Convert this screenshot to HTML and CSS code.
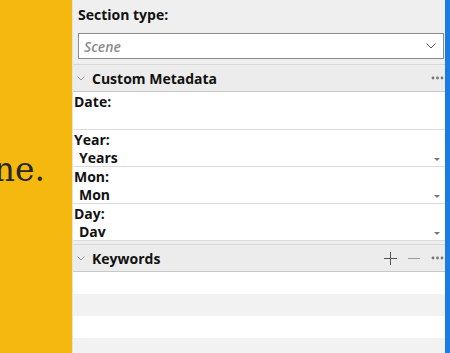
FILE: index.html
```html
<!DOCTYPE html>
<html>
<head>
<meta charset="utf-8">
<link rel="stylesheet" href="styles.css">
</head>
<body>
<div class="app">
  <div class="editor">
    <div class="editor-text">ne.</div>
  </div>
  <div class="inspector">
    <div class="section-label">Section type:</div>
    <div class="select">
      <span class="select-value">Scene</span>
      <svg class="select-chevron" width="10" height="6" viewBox="0 0 10 6"><path d="M0.5 0.5 L5 5 L9.5 0.5" fill="none" stroke="#555" stroke-width="1"/></svg>
    </div>
    <div class="pane-header">
      <svg class="disclosure" width="8" height="5" viewBox="0 0 8 5"><path d="M0.5 0.5 L4 4 L7.5 0.5" fill="none" stroke="#999" stroke-width="1"/></svg>
      <span class="pane-title">Custom Metadata</span>
      <span class="header-tools">
        <svg class="dots" width="13" height="4" viewBox="0 0 13 4"><circle cx="2" cy="2" r="1.4" fill="#777"/><circle cx="6.5" cy="2" r="1.4" fill="#777"/><circle cx="11" cy="2" r="1.4" fill="#777"/></svg>
      </span>
    </div>
    <div class="fields">
      <div class="field field-date">
        <div class="field-label">Date:</div>
      </div>
      <div class="field">
        <div class="field-label">Year:</div>
        <div class="field-value"><span>Years</span><span class="tri"></span></div>
      </div>
      <div class="field">
        <div class="field-label">Mon:</div>
        <div class="field-value"><span>Mon</span><span class="tri"></span></div>
      </div>
      <div class="field">
        <div class="field-label">Day:</div>
        <div class="field-value"><span>Dav</span><span class="tri"></span></div>
      </div>
    </div>
    <div class="pane-header keywords">
      <svg class="disclosure" width="8" height="5" viewBox="0 0 8 5"><path d="M0.5 0.5 L4 4 L7.5 0.5" fill="none" stroke="#999" stroke-width="1"/></svg>
      <span class="pane-title">Keywords</span>
      <span class="header-tools">
        <svg class="tool" width="13" height="13" viewBox="0 0 13 13"><path d="M6.5 0 V13 M0 6.5 H13" stroke="#555" stroke-width="1"/></svg>
        <svg class="tool" width="12" height="12" viewBox="0 0 12 12"><path d="M0 6.5 H12" stroke="#999" stroke-width="1"/></svg>
        <svg class="dots" width="13" height="4" viewBox="0 0 13 4"><circle cx="2" cy="2" r="1.4" fill="#777"/><circle cx="6.5" cy="2" r="1.4" fill="#777"/><circle cx="11" cy="2" r="1.4" fill="#777"/></svg>
      </span>
    </div>
    <div class="keyword-list">
      <div class="kw-row"></div>
      <div class="kw-row alt"></div>
      <div class="kw-row"></div>
      <div class="kw-row alt"></div>
    </div>
  </div>
</div>
</body>
</html>
```
FILE: styles.css
```css
html, body {
  margin: 0;
  padding: 0;
}
body {
  width: 450px;
  height: 353px;
  overflow: hidden;
  font-family: "Open Sans", "Noto Sans", sans-serif;
  color: #111;
}
.app {
  display: flex;
  height: 353px;
  overflow: hidden;
}
.editor {
  width: 72px;
  flex: none;
  background: #f4b80f;
  overflow: hidden;
  display: flex;
  justify-content: flex-end;
  padding-right: 27px;
  box-sizing: border-box;
}
.editor-text {
  font-family: "DejaVu Serif", serif;
  font-size: 33px;
  color: #262626;
  white-space: nowrap;
  margin-top: 151px;
  line-height: 38px;
  height: 38px;
}
.inspector {
  flex: 1;
  background: #efefef;
  border-left: 1px solid #e2e2e2;
  border-right: 5px solid #1a7ae6;
  display: flex;
  flex-direction: column;
  min-width: 0;
  overflow: hidden;
}
.inspector > * {
  flex-shrink: 0;
}
.section-label {
  font-weight: 700;
  font-size: 14px;
  line-height: 18px;
  padding: 6px 0 0 5px;
  height: 33px;
  box-sizing: border-box;
}
.select {
  margin: 0 0 0 5px;
  width: 366px;
  height: 26px;
  box-sizing: border-box;
  background: #fff;
  border: 1px solid #8a8a8a;
  display: flex;
  align-items: center;
  justify-content: space-between;
  padding: 0 7px 0 5px;
}
.select-value {
  font-style: italic;
  font-size: 14px;
  color: #8c8c8c;
  font-weight: 600;
}
.pane-header {
  margin-top: 5px;
  height: 28px;
  box-sizing: border-box;
  border-top: 1px solid #d8d8d8;
  border-bottom: 1px solid #c8c8c8;
  background: #ececec;
  display: flex;
  align-items: center;
  padding: 0 1px 0 4px;
}
.disclosure {
  margin-right: 7px;
}
.pane-title {
  font-weight: 700;
  font-size: 14px;
  flex: 1;
}
.header-tools {
  display: flex;
  align-items: center;
  gap: 11px;
}
.fields {
  background: #fff;
  display: flex;
  flex-direction: column;
}
.field {
  height: 37px;
  box-sizing: border-box;
  border-bottom: 1px solid #dcdcdc;
  padding: 1px 0 0 1px;
}
.field-date {
  height: 38px;
}
.field-label {
  font-weight: 700;
  font-size: 14px;
  line-height: 18px;
}
.field-value {
  display: flex;
  justify-content: space-between;
  align-items: center;
  padding: 0 5px 0 5px;
  font-weight: 700;
  font-size: 14px;
  line-height: 17px;
}
.tri {
  width: 0;
  height: 0;
  border-left: 3px solid transparent;
  border-right: 3px solid transparent;
  border-top: 3px solid #777;
  margin-top: 3px;
}
.keywords {
  margin-top: 3px;
}
.keyword-list {
  display: flex;
  flex-direction: column;
}
.kw-row {
  height: 22px;
  background: #fff;
}
.kw-row.alt {
  background: #f2f2f2;
}
```
